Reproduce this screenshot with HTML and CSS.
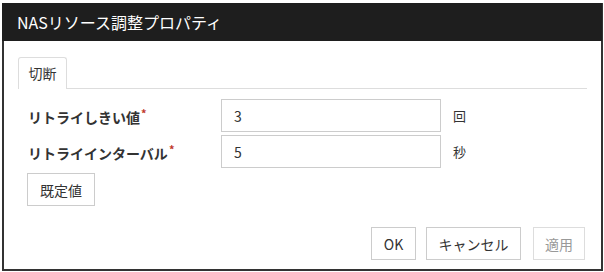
FILE: index.html
```html
<!DOCTYPE html>
<html lang="ja">
  <head>
    <meta charset="UTF-8" />
    <title>NASリソース調整プロパティ</title>
    <link rel="stylesheet" href="styles.css">
  </head>
  <body>
    <div class="dialog">
      <div class="dialog-title">NASリソース調整プロパティ</div>
      <div class="dialog-body">
        <div class="tabs">
          <div class="tab active">切断</div>
        </div>
        <form class="tab-pane" action="" method="POST">
          <div class="form-row">
            <label class="field-label">リトライしきい値<span class="required">*</span></label>
            <input type="text" class="field-input" name="retry-count" value="3" />
            <span class="unit">回</span>
          </div>
          <div class="form-row">
            <label class="field-label">リトライインターバル<span class="required">*</span></label>
            <input type="text" class="field-input" name="retry-interval" value="5" />
            <span class="unit">秒</span>
          </div>
          <div class="defaults-row">
            <button type="button" class="btn">既定値</button>
          </div>
        </form>
        <div class="dialog-footer">
          <button type="button" class="btn btn-ok">OK</button>
          <button type="button" class="btn btn-cancel">キャンセル</button>
          <button type="button" class="btn btn-apply" disabled>適用</button>
        </div>
      </div>
    </div>
  </body>
</html>
```

FILE: styles.css
```css
body {
  margin: 0;
  background-color: #fff;
  font-family: "Noto Sans CJK JP", "Noto Sans", sans-serif;
  color: #333;
}

.dialog {
  margin: 3px 1px 1px 2px;
  height: 268px;
  box-sizing: border-box;
  border: 2px solid #333;
  border-top: none;
  display: flex;
  flex-direction: column;
}

.dialog-title {
  background-color: #1e1e1e;
  color: #fff;
  font-size: 16px;
  height: 38px;
  line-height: 38px;
  padding-left: 15px;
  margin: 0 -1px 0 -2px;
}

.dialog-body {
  flex-grow: 1;
  display: flex;
  flex-direction: column;
  padding: 16px 14px 9px 14px;
}

.tabs {
  display: flex;
  border-bottom: 1px solid #ddd;
  height: 31px;
}

.tab {
  font-size: 14px;
  width: 49px;
  box-sizing: border-box;
  text-align: center;
  line-height: 30px;
  border: 1px solid #ddd;
  border-bottom: none;
  border-radius: 3px 3px 0 0;
  background-color: #fff;
  margin-bottom: -1px;
  height: 32px;
}

.tab-pane {
  padding: 10px 0 0 10px;
  margin: 0;
}

.form-row {
  display: flex;
  align-items: center;
  height: 33px;
  margin-bottom: 3px;
}

.field-label {
  width: 193px;
  font-size: 14px;
  font-weight: bold;
  color: #333;
}

.required {
  color: #c0392b;
  font-size: 11px;
  vertical-align: 5px;
  margin-left: 1px;
}

.field-input {
  width: 220px;
  height: 33px;
  box-sizing: border-box;
  border: 1px solid #ccc;
  padding: 0 12px;
  font-size: 14px;
  font-family: inherit;
  color: #333;
}

.unit {
  font-size: 13px;
  margin-left: 12px;
}

.defaults-row {
  margin-top: 5px;
}

.btn {
  height: 33px;
  box-sizing: border-box;
  border: 1px solid #ccc;
  background-color: #fff;
  font-size: 14px;
  font-family: inherit;
  color: #333;
  padding: 0 12px;
}

.defaults-row .btn {
  width: 68px;
  margin-left: -1px;
}

.dialog-footer {
  margin-top: auto;
  display: flex;
  justify-content: flex-end;
  gap: 10px;
  padding-right: 2px;
}

.btn-ok {
  width: 45px;
  padding: 0;
}

.btn-cancel {
  width: 95px;
  padding: 0;
}

.btn-apply {
  width: 52px;
  padding: 0;
  margin-left: 2px;
  color: #999;
  border-color: #ddd;
}
```
